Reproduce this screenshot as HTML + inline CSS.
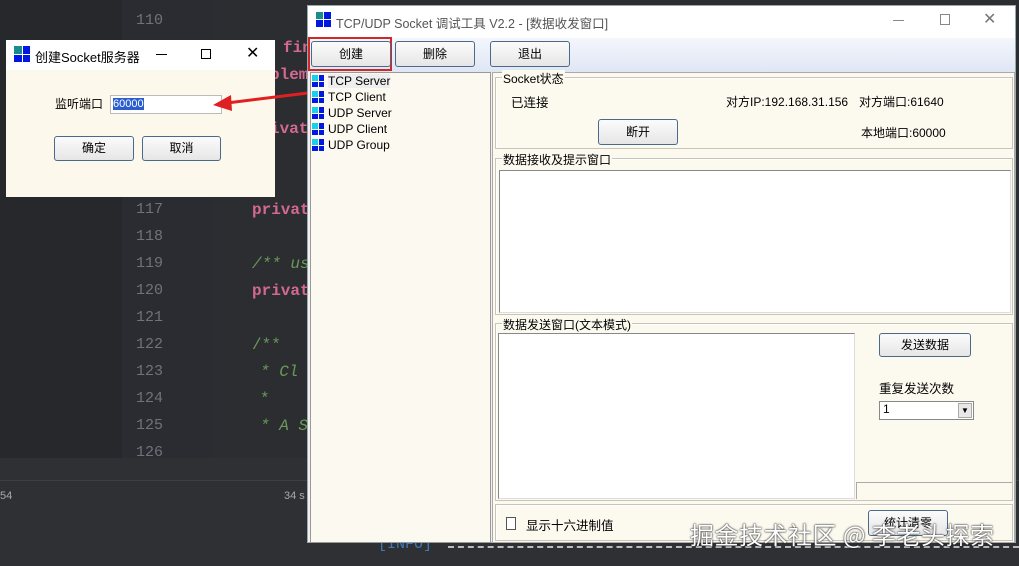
<!DOCTYPE html>
<html><head><meta charset="utf-8"><style>
*{box-sizing:border-box;margin:0;padding:0}
body{width:1019px;height:566px;overflow:hidden;background:#2b2d31;position:relative;font-family:"Liberation Sans","Noto Sans CJK SC",sans-serif;font-size:12px;color:#000}
.a{position:absolute}
.ln{position:absolute;left:133px;width:30px;text-align:right;color:#6f737a;font-family:"Liberation Mono",monospace;font-size:15px}
.code{position:absolute;font-family:"Liberation Mono",monospace;font-size:16px;font-weight:bold}
.btn{position:absolute;border:1px solid #4a6a8a;border-radius:3px;background:linear-gradient(#fbfbfb,#e6e6e6);text-align:center;font-size:12px}
.ico{position:absolute;width:14px;height:14px;display:grid;grid-template-columns:1fr 1fr;gap:1px}
.ico i{background:#0018e0}.ico i:first-child{background:#1a8c8c}
.t i{background:#0018e0}.t i:first-child{background:#18d0e8}
.grp{position:absolute;border:1px solid #c8c4b8;box-shadow:inset 1px 1px 0 #fff}
.gl{position:absolute;top:-8px;left:6px;background:#fcf9ef;font-size:12px;padding:0 1px}
</style></head><body>
<div class="a" style="left:0;top:0;width:122px;height:458px;background:#26282c"></div>
<div class="a" style="left:122px;top:0;width:90px;height:458px;background:#2a2c31"></div>
<div class="a" style="left:0;top:458px;width:1019px;height:108px;background:#2e3034"></div>
<div class="a" style="left:0;top:480px;width:1019px;height:1px;background:#3c3f44"></div>
<div class="ln" style="top:12px">110</div>
<div class="ln" style="top:201px">117</div><div class="ln" style="top:228px">118</div><div class="ln" style="top:255px">119</div><div class="ln" style="top:282px">120</div><div class="ln" style="top:309px">121</div><div class="ln" style="top:336px">122</div><div class="ln" style="top:363px">123</div><div class="ln" style="top:390px">124</div><div class="ln" style="top:417px">125</div><div class="ln" style="top:444px">126</div>
<div class="code" style="left:283px;top:39px;color:#d3698f">fin</div>
<div class="code" style="left:270px;top:66px;color:#d3698f">plem</div>
<div class="code" style="left:270px;top:120px;color:#d3698f">ivat</div>
<div class="code" style="left:252px;top:201px;color:#d3698f">privat</div>
<div class="code" style="left:252px;top:255px;color:#6a9a5a;font-style:italic;font-weight:normal">/** us</div>
<div class="code" style="left:252px;top:282px;color:#d3698f">privat</div>
<div class="code" style="left:252px;top:336px;color:#6a9a5a;font-weight:normal">/**</div>
<div class="code" style="left:260px;top:363px;color:#6a9a5a;font-style:italic;font-weight:normal">* Cl</div>
<div class="code" style="left:260px;top:390px;color:#6a9a5a;font-weight:normal">*</div>
<div class="code" style="left:260px;top:417px;color:#6a9a5a;font-style:italic;font-weight:normal">* A S</div>
<div class="a" style="left:0;top:490px;color:#aaa;font-size:11px">54</div>
<div class="a" style="left:284px;top:490px;color:#aaa;font-size:11px">34 s</div>
<div class="a" style="left:378px;top:536px;color:#3a7ab8;font-family:'Liberation Mono',monospace;font-size:15px">[INFO]</div>
<div class="a" style="left:448px;top:546px;width:571px;border-top:2px dashed #bbb"></div>

<!-- small dialog -->
<div class="a" style="left:6px;top:40px;width:269px;height:157px;background:#fdf8ec">
 <div class="a" style="left:0;top:0;width:269px;height:30px;background:#fff"></div>
 <div class="ico" style="left:8px;top:6px;width:16px;height:16px"><i></i><i></i><i></i><i></i></div>
 <div class="a" style="left:29px;top:7px;font-size:13px">创建Socket服务器</div>
 <div class="a" style="left:150px;top:14px;width:11px;height:1px;background:#000"></div>
 <div class="a" style="left:195px;top:9px;width:10px;height:10px;border:1px solid #000"></div>
 <div class="a" style="left:240px;top:3px;font-size:16px">✕</div>
 <div class="a" style="left:49px;top:55px;font-size:12px">监听端口</div>
 <div class="a" style="left:104px;top:55px;width:112px;height:19px;border:1px solid #bbb;background:#fff"><span style="background:#2a5ecf;color:#fff;font-size:11px;margin-left:2px">60000</span></div>
 <div class="btn" style="left:48px;top:96px;width:80px;height:25px;line-height:23px">确定</div>
 <div class="btn" style="left:136px;top:96px;width:79px;height:25px;line-height:23px">取消</div>
</div>
<svg class="a" style="left:205px;top:85px" width="105" height="30"><line x1="103" y1="8" x2="22" y2="18" stroke="#e02020" stroke-width="3"/><polygon points="8,20 26,10 27,26" fill="#e02020"/></svg>

<!-- main window -->
<div class="a" style="left:307px;top:5px;width:709px;height:538px;background:#f0f0f0;border:1px solid #9aa">
 <div class="a" style="left:0;top:0;width:707px;height:32px;background:#fff"></div>
 <div class="ico" style="left:8px;top:6px;width:15px;height:15px"><i></i><i></i><i></i><i></i></div>
 <div class="a" style="left:28px;top:7px;font-size:12.5px;color:#555">TCP/UDP Socket 调试工具 V2.2 - [数据收发窗口]</div>
 <div class="a" style="left:585px;top:14px;width:11px;height:1px;background:#888"></div>
 <div class="a" style="left:632px;top:8px;width:10px;height:11px;border:1px solid #888"></div>
 <div class="a" style="left:675px;top:3px;font-size:16px;color:#777">✕</div>
 <div class="a" style="left:0;top:32px;width:707px;height:34px;background:linear-gradient(#f4f6fc,#dfe6f4)"></div>
 <div class="a" style="left:0;top:31px;width:84px;height:34px;border:2px solid #d02828"></div>
 <div class="btn" style="left:3px;top:35px;width:80px;height:26px;line-height:24px">创建</div>
 <div class="btn" style="left:87px;top:35px;width:80px;height:26px;line-height:24px">删除</div>
 <div class="btn" style="left:182px;top:35px;width:80px;height:26px;line-height:24px">退出</div>
 <div class="a" style="left:2px;top:66px;width:181px;height:471px;background:#fcfaf0;border:1px solid #999"></div>
 <div class="ico t" style="left:4px;top:69px;width:12px;height:12px"><i></i><i></i><i></i><i></i></div><div class="a" style="left:20px;top:68px;background:#eee">TCP Server</div>
 <div class="ico t" style="left:4px;top:85px;width:12px;height:12px"><i></i><i></i><i></i><i></i></div><div class="a" style="left:20px;top:84px">TCP Client</div>
 <div class="ico t" style="left:4px;top:101px;width:12px;height:12px"><i></i><i></i><i></i><i></i></div><div class="a" style="left:20px;top:100px">UDP Server</div>
 <div class="ico t" style="left:4px;top:117px;width:12px;height:12px"><i></i><i></i><i></i><i></i></div><div class="a" style="left:20px;top:116px">UDP Client</div>
 <div class="ico t" style="left:4px;top:133px;width:12px;height:12px"><i></i><i></i><i></i><i></i></div><div class="a" style="left:20px;top:132px">UDP Group</div>
 <div class="a" style="left:184px;top:66px;width:523px;height:471px;background:#fcf9ef;border:1px solid #aaa"></div>
 <div class="grp" style="left:187px;top:71px;width:518px;height:72px"><div class="gl">Socket状态</div></div>
 <div class="a" style="left:203px;top:86px;font-size:12.5px">已连接</div>
 <div class="a" style="left:418px;top:87px">对方IP:192.168.31.156</div>
 <div class="a" style="left:551px;top:87px">对方端口:61640</div>
 <div class="btn" style="left:290px;top:113px;width:80px;height:26px;line-height:24px">断开</div>
 <div class="a" style="left:553px;top:118px">本地端口:60000</div>
 <div class="grp" style="left:187px;top:152px;width:518px;height:157px"><div class="gl">数据接收及提示窗口</div></div>
 <div class="a" style="left:191px;top:164px;width:512px;height:143px;background:#fff;border:1px solid #888;border-right-color:#ddd;border-bottom-color:#ddd"></div>
 <div class="grp" style="left:187px;top:317px;width:518px;height:178px"><div class="gl">数据发送窗口(文本模式)</div></div>
 <div class="a" style="left:190px;top:327px;width:357px;height:166px;background:#fff;border:1px solid #888;border-right-color:#ddd;border-bottom-color:#ddd"></div>
 <div class="btn" style="left:571px;top:327px;width:92px;height:24px;line-height:22px">发送数据</div>
 <div class="a" style="left:571px;top:372px;font-size:12.5px">重复发送次数</div>
 <div class="a" style="left:571px;top:395px;width:95px;height:19px;background:#fff;border:1px solid #888"><span style="margin-left:3px">1</span><div class="a" style="right:1px;top:1px;width:14px;height:15px;background:#e8e8e8;border:1px solid #aaa;font-size:8px;text-align:center;line-height:14px">▼</div></div>
 <div class="a" style="left:548px;top:476px;width:156px;height:17px;border-top:1px solid #aaa;border-left:1px solid #aaa"></div>
 <div class="grp" style="left:187px;top:498px;width:518px;height:37px"></div>
 <div class="a" style="left:198px;top:511px;width:10px;height:13px;border:1px solid #555;background:#fff"></div>
 <div class="a" style="left:218px;top:509px;font-size:12.5px">显示十六进制值</div>
 <div class="btn" style="left:560px;top:504px;width:80px;height:26px;line-height:24px">统计清零</div>
</div>
<div class="a" style="left:690px;top:516px;font-size:24px;letter-spacing:0.5px;color:#fff;text-shadow:0 0 2px #222,0 0 1px #222;font-family:'Noto Sans CJK SC',sans-serif;white-space:nowrap">掘金技术社区 @ 李老头探索</div>
</body></html>
